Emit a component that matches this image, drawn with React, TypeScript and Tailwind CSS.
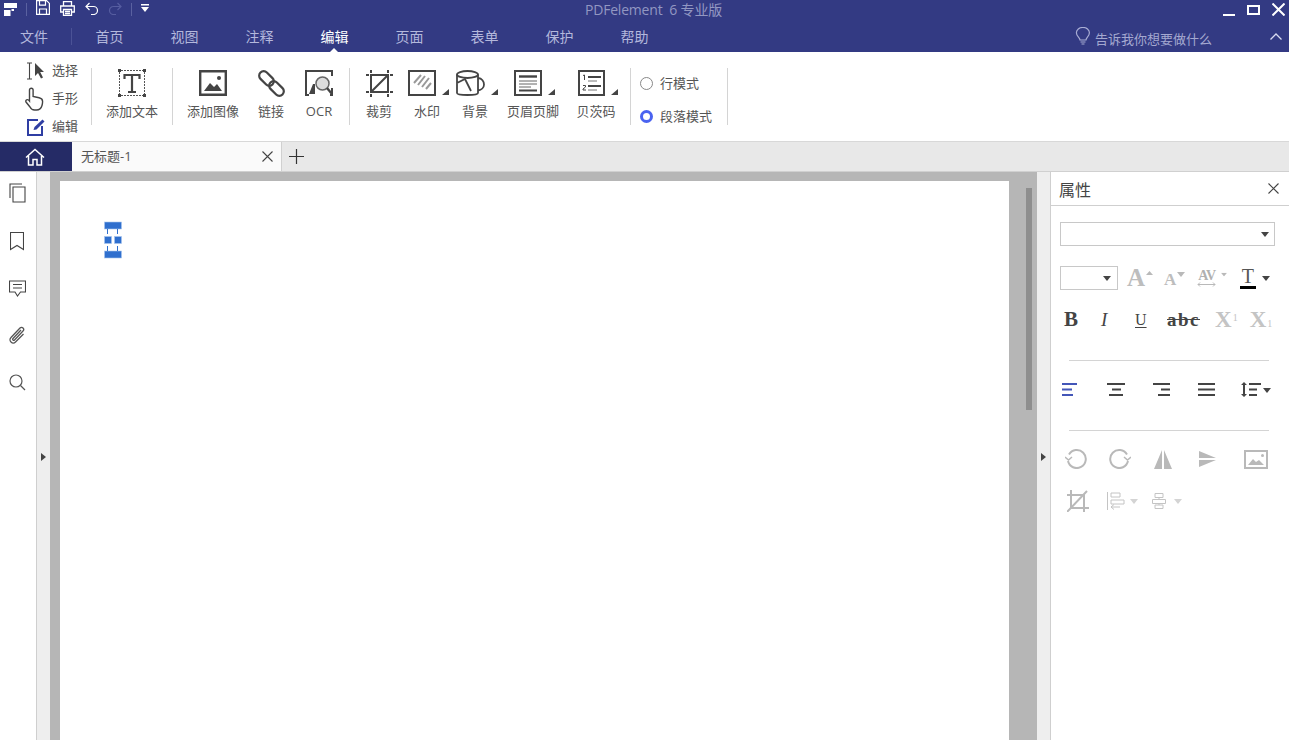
import React from 'react';

const Tri = ({ color = '#444', className = '' }: { color?: string; className?: string }) => (
  <svg width="8" height="5" viewBox="0 0 8 5" className={className}>
    <path d="M0 0h8L4 5z" fill={color} />
  </svg>
);

const Corner = () => (
  <svg width="7" height="6" viewBox="0 0 7 6" className="absolute right-[-13px] bottom-[1px]">
    <path d="M7 0v6H0z" fill="#444" />
  </svg>
);

const Item = ({ label, width, children, corner }: { label: string; width: number; children: React.ReactNode; corner?: boolean }) => (
  <div className="flex flex-col items-center" style={{ width }}>
    <div className={`relative mt-[2px] h-[26px] flex items-center justify-center ${corner ? 'mr-[10px]' : ''}`}>
      {children}
      {corner && <Corner />}
    </div>
    <span className="mt-[6px] text-[13px] leading-[18px] text-[#555]">{label}</span>
  </div>
);

const Group = ({ children, className = '' }: { children: React.ReactNode; className?: string }) => (
  <div className={`mt-[16px] h-[57px] flex border-r border-[#d4d4d4] ${className}`}>{children}</div>
);

const tabs = ['首页', '视图', '注释', '编辑', '页面', '表单', '保护', '帮助'];

function TitleBar() {
  return (
    <header className="h-[52px] shrink-0 bg-[#333a83] flex flex-col">
      <div className="h-[20px] flex items-start relative">
        <div className="flex items-start w-[500px]">
          <svg width="13" height="13" viewBox="0 0 13 13" className="ml-[4px] mt-[3px]">
            <path d="M0 0h13v5H0zM0 7h6.500v6H0zM7.500 6H10v2H7.500z" fill="#fff" />
          </svg>
          <div className="ml-[9px] mt-[3px] h-[13px] w-px bg-[#5a61a0]" />
          <svg width="14" height="15" viewBox="0 0 14 15" className="ml-[9px]" fill="none" stroke="#fff" strokeWidth="1.2">
            <path d="M.6.6h10l2.800 2.800v11H.6zM3.500.6v4.500h6V.6M3.500 14.400V9h7v5.400" />
          </svg>
          <svg width="15" height="15" viewBox="0 0 15 15" className="ml-[10px] mt-[1px]" fill="none" stroke="#fff" strokeWidth="1.3">
            <path d="M3.500 5V.7h8V5M3.500 11H.7V5h13.600v6h-2.800M3.500 8.500h8v6h-8zM5 10.500h5M5 12.500h5" />
          </svg>
          <svg width="14" height="13" viewBox="0 0 14 13" className="ml-[10px] mt-[2px]" fill="none" stroke="#fff" strokeWidth="1.2">
            <path d="M4.500 1 1 4.500 4.500 8M1 4.500h7.500a4 4 0 0 1 0 8H6" />
          </svg>
          <svg width="14" height="13" viewBox="0 0 14 13" className="ml-[9px] mt-[2px]" fill="none" stroke="#565da0" strokeWidth="1.2">
            <path d="M9.500 1 13 4.500 9.500 8M13 4.500H5.500a4 4 0 0 0 0 8H8" />
          </svg>
          <div className="ml-[9px] mt-[3px] h-[13px] w-px bg-[#5a61a0]" />
          <svg width="8" height="8" viewBox="0 0 8 8" className="ml-[9px] mt-[4px]">
            <path d="M0 0h8v1.500H0zM0 3h8L4 8z" fill="#fff" />
          </svg>
        </div>
        <span className="ml-[85px] text-[14px] tracking-[-0.2px] leading-[20px] text-[#9297c2] whitespace-pre">PDFelement  6 专业版</span>
        <div className="ml-auto flex items-start">
          <div className="mt-[14px] h-[2px] w-[12px] bg-white" />
          <div className="ml-[12px] mt-[5px] h-[10px] w-[13px] border-2 border-white" />
          <svg width="13" height="13" viewBox="0 0 13 13" className="ml-[12px] mr-[4px] mt-[3px]" stroke="#fff" strokeWidth="2">
            <path d="M.5.500l12 12M12.500.500l-12 12" />
          </svg>
        </div>
      </div>
      <div className="h-[32px] flex items-start pt-[8px]">
        <span className="w-[72px] h-[17px] pl-[20px] text-[14px] leading-[18px] text-[#b4b8dc] border-r border-[#4b5296]">文件</span>
        {tabs.map(t => (
          <div key={t} className="relative w-[75px] h-[24px] text-center text-[14px] leading-[18px]">
            <span className={t === '编辑' ? 'text-white' : 'text-[#b4b8dc]'}>{t}</span>
            {t === '编辑' && (
              <svg width="8" height="4" viewBox="0 0 8 4" className="absolute left-[33px] bottom-0">
                <path d="M4 0l4 4H0z" fill="#fff" />
              </svg>
            )}
          </div>
        ))}
        <svg width="16" height="18" viewBox="0 0 16 18" className="ml-auto mt-[-1px]" fill="none" stroke="#a9add4" strokeWidth="1.2">
          <path d="M5 13c0-2.500-3.600-3.500-3.600-7.200a6.500 5.400 0 0 1 13 0C14.400 9.500 11 10.500 11 13zM5.500 15h5M6.500 17h3" />
        </svg>
        <span className="ml-[4px] mt-[2px] text-[13px] leading-[18px] text-[#a4a8d0]">告诉我你想要做什么</span>
        <svg width="12" height="7" viewBox="0 0 12 7" className="ml-[58px] mr-[7px] mt-[5px]" fill="none" stroke="#d8daf0" strokeWidth="1.3">
          <path d="M.5 6.500 6 1l5.500 5.500" />
        </svg>
      </div>
    </header>
  );
}

function Ribbon() {
  return (
    <section className="h-[90px] shrink-0 bg-white border-b border-[#d8d8d8] flex items-start">
      <div className="w-[91px] pl-[26px] pt-[5px] shrink-0">
        <div className="h-[28px] flex items-center">
          <svg width="20" height="18" viewBox="0 0 20 18" fill="none">
            <path d="M1 1h5M3.500 1v16M1 17h5" stroke="#444" strokeWidth="1.100" />
            <path d="M9 1v13l3-3 3 5.500 2-1-2.800-5.500H18z" fill="#444" />
          </svg>
          <span className="ml-[6px] text-[13px] text-[#555]">选择</span>
        </div>
        <div className="h-[28px] flex items-center">
          <svg width="20" height="24" viewBox="0 0 20 24" fill="none" stroke="#444" strokeWidth="1.400" className="ml-[-2px]">
            <path d="M5.500 14V3a1.800 1.800 0 0 1 3.600 0v6.500l2.500.5 3.500.8c2 .5 3.500 1.500 3.500 3.700 0 1-.2 2.500-.6 4-.7 2.500-2.500 4.500-5.500 4.500h-2c-2 0-3.500-1-4.500-3L2 15c-1-2 1.500-3.500 3.500-1z" />
          </svg>
          <span className="ml-[8px] text-[13px] text-[#555]">手形</span>
        </div>
        <div className="h-[28px] flex items-center">
          <svg width="19" height="18" viewBox="0 0 19 18" fill="none" className="ml-px">
            <path d="M11 2H1v15h14V8" stroke="#2f3ea3" strokeWidth="2" />
            <path d="M6.500 12 7.500 9 15.500 1.500l2 2-8 8z" fill="#2f3ea3" />
          </svg>
          <span className="ml-[6px] text-[13px] text-[#555]">编辑</span>
        </div>
      </div>
      <div className="mt-[16px] h-[57px] w-px bg-[#d4d4d4]" />
      <Group className="w-[81px] justify-center">
        <Item label="添加文本" width={80}>
          <svg width="28" height="28" viewBox="0 0 28 28" fill="none">
            <path d="M3 1.500h22M3 26.500h22M1.500 3v22M26.500 3v22" stroke="#555" strokeWidth="1" strokeDasharray="2 1" />
            <path d="M0 0h3v3H0zM25 0h3v3h-3zM0 25h3v3H0zM25 25h3v3h-3z" fill="#444" />
            <path d="M6.500 10V6h15v4M14 6v17M10 23h8" stroke="#444" strokeWidth="2.200" />
          </svg>
        </Item>
      </Group>
      <Group className="pl-[10px] w-[177px]">
        <Item label="添加图像" width={60}>
          <svg width="28" height="26" viewBox="0 0 28 26" fill="none">
            <path d="M1.200 1.200h25.600v23.600H1.200z" stroke="#444" strokeWidth="2.400" />
            <path d="M5 21l6-8 4 4 3-3 5 7z" fill="#444" />
            <circle cx="20" cy="8" r="2" fill="#444" />
          </svg>
        </Item>
        <Item label="链接" width={56}>
          <svg width="27" height="27" viewBox="0 0 27 27" fill="none" stroke="#444" strokeWidth="2.200">
            <rect x="-4.500" y="-8.500" width="9" height="17" rx="4.500" transform="translate(8.500 8.500) rotate(-45)" />
            <rect x="-4.500" y="-8.500" width="9" height="17" rx="4.500" transform="translate(18.500 18.500) rotate(-45)" />
          </svg>
        </Item>
        <Item label="OCR" width={40}>
          <svg width="28" height="27" viewBox="0 0 28 27" fill="none">
            <path d="M4 25H1V1h26v5M27 18v7h-2" stroke="#444" strokeWidth="2" />
            <path d="M4 24l4-10h2v10z" fill="#444" />
            <circle cx="17.500" cy="13.500" r="6.500" fill="#ddd" stroke="#666" strokeWidth="1.500" />
            <path d="M22 18l5 6" stroke="#444" strokeWidth="2.400" />
          </svg>
        </Item>
      </Group>
      <Group className="pl-[5px] w-[281px]">
        <Item label="裁剪" width={48}>
          <svg width="27" height="27" viewBox="0 0 27 27" fill="none" stroke="#444">
            <path d="M5 5h17v17H5zM5 22 22 5" strokeWidth="2" />
            <path d="M5 0v3M22 0v3M5 24v3M22 24v3M0 5h3M0 22h3M24 5h3M24 22h3" strokeWidth="2" />
          </svg>
        </Item>
        <Item label="水印" width={48} corner>
          <svg width="28" height="26" viewBox="0 0 28 26" fill="none">
            <path d="M1 1h26v24H1z" stroke="#444" strokeWidth="2" />
            <path d="M6 13l7-8M10 15l7-9M14 17l7-9M18 19l5-6" stroke="#999" strokeWidth="2" />
          </svg>
        </Item>
        <Item label="背景" width={48} corner>
          <svg width="29" height="26" viewBox="0 0 29 26" fill="none" stroke="#444" strokeWidth="1.800">
            <ellipse cx="11.500" cy="4.500" rx="10.500" ry="3.500" />
            <path d="M1 4.500V23c0 1.500 4 2 10.500 2S22 24.500 22 23V4.500M22 8c4 .5 6 3.500 6 6.500S25.500 20 22 20.500M1 13l8-4 6 12" />
          </svg>
        </Item>
        <Item label="页眉页脚" width={68} corner>
          <svg width="28" height="26" viewBox="0 0 28 26" fill="none">
            <path d="M1 1h26v24H1z" stroke="#444" strokeWidth="2" />
            <path d="M5 6.500h18" stroke="#444" strokeWidth="2.400" />
            <path d="M5 11h18M5 14h18M5 17h12" stroke="#666" strokeWidth="1" />
            <path d="M5 20.500h18" stroke="#444" strokeWidth="2" />
          </svg>
        </Item>
        <Item label="贝茨码" width={58} corner>
          <svg width="27" height="26" viewBox="0 0 27 26" fill="none">
            <path d="M1 1h25v24H1z" stroke="#444" strokeWidth="2" />
            <path d="M10 7h13M10 16h13" stroke="#444" strokeWidth="1.800" />
            <path d="M10 11h9M10 20h9" stroke="#777" strokeWidth="1" />
            <path d="M5 5.500 6.500 5v5M5 15.500h2.500v1.500L5 19v1h3" stroke="#444" strokeWidth="1" />
          </svg>
        </Item>
      </Group>
      <Group className="w-[97px] flex-col pl-[9px] pt-[6px] gap-[15px]">
        <label className="flex items-center h-[18px]">
          <span className="w-[13px] h-[13px] rounded-full border border-[#888] bg-white" />
          <span className="ml-[7px] text-[13px] leading-[18px] text-[#555]">行模式</span>
        </label>
        <label className="flex items-center h-[18px]">
          <span className="w-[13px] h-[13px] rounded-full border-[3.500px] border-[#4a63f0] bg-white" />
          <span className="ml-[7px] text-[13px] leading-[18px] text-[#555]">段落模式</span>
        </label>
      </Group>
    </section>
  );
}

function TabBar() {
  return (
    <div className="h-[30px] shrink-0 bg-[#e8e8e8] flex items-stretch border-b border-[#d0d0d0]">
      <div className="w-[72px] bg-[#252b66] flex items-center justify-center">
        <svg width="20" height="18" viewBox="0 0 20 18" fill="none" stroke="#fff" strokeWidth="1.500" className="mr-[2px]">
          <path d="M1 9.500 10 1.500l9 8M3.500 8v9h4.500v-5.500h4V17h4.500V8" />
        </svg>
      </div>
      <div className="w-[210px] bg-[#fafafa] border-r border-[#d0d0d0] flex items-center pl-[9px] pr-[8px]">
        <span className="mb-[2px] text-[13px] leading-[18px] text-[#555]">无标题-1</span>
        <svg width="11" height="11" viewBox="0 0 11 11" className="ml-auto" stroke="#444" strokeWidth="1.100">
          <path d="M.5.500l10 10M10.500.500l-10 10" />
        </svg>
      </div>
      <div className="flex items-center ml-[7px]">
        <svg width="15" height="15" viewBox="0 0 15 15" stroke="#333" strokeWidth="1.200">
          <path d="M7.500 0v15M0 7.500h15" />
        </svg>
      </div>
    </div>
  );
}

function LeftRail() {
  return (
    <aside className="w-[37px] shrink-0 bg-white border-r border-[#cfcfcf] flex flex-col items-center pt-[11px] pr-[2px] gap-[26px]">
      <svg width="17" height="20" viewBox="0 0 17 20" fill="none" stroke="#444" strokeWidth="1.100">
        <path d="M1 15V1h12M4 4h12v15H4z" />
      </svg>
      <svg width="14" height="19" viewBox="0 0 14 19" fill="none" stroke="#444" strokeWidth="1.100" className="mt-[3px]">
        <path d="M.5.500h13v17l-6.500-4-6.500 4z" />
      </svg>
      <svg width="17" height="17" viewBox="0 0 17 17" fill="none" stroke="#444" strokeWidth="1.100" className="mt-[3px]">
        <path d="M.5 1h16v11h-5L8.500 16 6 12H.5zM4 4.500h9M4 8h9" />
      </svg>
      <svg width="18" height="19" viewBox="0 0 18 19" fill="none" stroke="#555" strokeWidth="1.300" className="mt-[3px]">
        <path d="M13 4 5 12.500c-1 1 .5 2.500 1.500 1.500l8.500-9c2-2-1-5-3-3L3 11.500c-3 3 1.500 7.500 4.500 4.500L15.500 8" />
      </svg>
      <svg width="17" height="17" viewBox="0 0 17 17" fill="none" stroke="#555" strokeWidth="1.200" className="mt-[3px]">
        <circle cx="7" cy="7" r="6" />
        <path d="M11.500 11.500l4.500 4.500" />
      </svg>
    </aside>
  );
}

const Strip = () => (
  <div className="w-[13px] shrink-0 bg-[#eeeeee] flex items-center justify-center pt-[2px]">
    <svg width="5" height="8" viewBox="0 0 5 8">
      <path d="M0 0l5 4-5 4z" fill="#444" />
    </svg>
  </div>
);

function Canvas() {
  return (
    <div className="flex-1 bg-[#b6b6b6] flex items-start pl-[10px] pt-[9px] overflow-hidden">
      <div className="w-[949px] h-[600px] bg-white shrink-0 pl-[44px] pt-[40px]">
        <svg width="18" height="38" viewBox="0 0 18 38">
          <g fill="#2f6fce" stroke="#a9c5ee" strokeWidth=".6">
            <rect x=".5" y="1" width="17" height="7" />
            <rect x=".5" y="15.500" width="7" height="7" />
            <rect x="10.500" y="15.500" width="7" height="7" />
            <rect x=".5" y="30" width="17" height="7" />
          </g>
          <path d="M3.500 8v5M13.500 8v5M3.500 25v5M13.500 25v5" stroke="#2f6fce" />
        </svg>
      </div>
      <div className="ml-[17px] mt-[7px] w-[6px] h-[222px] bg-[#8e8e8e] shrink-0" />
    </div>
  );
}

const Gray = '#b9b9b9';

function Properties() {
  return (
    <aside className="w-[239px] shrink-0 bg-white border-l border-[#cfcfcf] flex flex-col font-['Liberation_Serif','Noto_Sans_CJK_SC',serif]">
      <div className="h-[34px] shrink-0 border-b border-[#cfcfcf] flex items-center pl-[8px] pr-[10px] font-['Open_Sans','Noto_Sans_CJK_SC',sans-serif]">
        <span className="mt-[2px] text-[16px] leading-[22px] text-[#444]">属性</span>
        <svg width="11" height="11" viewBox="0 0 11 11" className="ml-auto" stroke="#444" strokeWidth="1.100">
          <path d="M.5.500l10 10M10.500.500l-10 10" />
        </svg>
      </div>
      <div className="ml-[9px] mt-[16px] w-[215px] h-[24px] border border-[#c8c8c8] flex items-center justify-end pr-[5px]">
        <Tri />
      </div>
      <div className="ml-[9px] mt-[20px] h-[24px] flex items-center">
        <div className="w-[58px] h-[24px] border border-[#c8c8c8] flex items-center justify-end pr-[6px] shrink-0">
          <Tri />
        </div>
        <span className="ml-[9px] text-[25px] leading-[24px] font-bold text-[#bdbdbd]">A</span>
        <svg width="7" height="4" viewBox="0 0 7 4" className="ml-[1px] mb-[10px]"><path d="M3.500 0 7 4H0z" fill={Gray} /></svg>
        <span className="ml-[11px] text-[17px] leading-[24px] font-bold text-[#bdbdbd] mt-[3px]">A</span>
        <Tri color={Gray} className="ml-[1px] mb-[8px]" />
        <div className="ml-[12px] flex flex-col items-center w-[19px]">
          <span className="text-[14px] leading-[13px] font-bold tracking-[-0.5px] text-[#b0b0b0]">AV</span>
          <svg width="19" height="5" viewBox="0 0 19 5" fill="none" stroke={Gray}><path d="M1 2.500h17M3 .5l-2 2 2 2M16 .5l2 2-2 2" /></svg>
        </div>
        <Tri color={Gray} className="ml-[4px] mb-[8px] scale-75" />
        <div className="ml-[11px] flex flex-col items-center w-[17px]">
          <span className="text-[20px] leading-[18px] text-[#555]">T</span>
          <div className="mt-[1px] w-[16px] h-[3px] bg-black" />
        </div>
        <Tri className="ml-[6px]" />
      </div>
      <div className="ml-[13px] mt-[18px] h-[24px] flex items-center">
        <span className="w-[15px] text-[21px] font-bold text-[#444]">B</span>
        <span className="ml-[22px] w-[11px] text-[19px] italic text-[#444]">I</span>
        <span className="ml-[23px] w-[13px] text-[16px] underline underline-offset-2 text-[#444]">U</span>
        <span className="ml-[19px] text-[19px] font-bold tracking-[1.500px] line-through text-[#444]">abc</span>
        <span className="ml-[15px] text-[23px] font-bold text-[#c4c4c4]">X</span>
        <span className="text-[10px] mb-[6px] ml-[1px] text-[#c4c4c4]">1</span>
        <span className="ml-[12px] text-[23px] font-bold text-[#c4c4c4]">X</span>
        <span className="text-[10px] mt-[6px] ml-[1px] text-[#c4c4c4]">1</span>
      </div>
      <div className="ml-[18px] mt-[28px] w-[200px] h-px bg-[#d4d4d4] shrink-0" />
      <div className="ml-[11px] mt-[20px] h-[16px] flex items-center">
        <svg width="16" height="13" viewBox="0 0 16 13"><path d="M0 0h15v2H0zM0 5.500h10v2H0zM0 11h11v2H0z" fill="#4356b8" /></svg>
        <svg width="18" height="13" viewBox="0 0 18 13" className="ml-[29px]"><path d="M0 0h18v2H0zM5 5.500h9v2H5zM2 11h14v2H2z" fill="#444" /></svg>
        <svg width="18" height="13" viewBox="0 0 18 13" className="ml-[28px]"><path d="M0 0h17v2H0zM8 5.500h9v2H8zM5 11h12v2H5z" fill="#444" /></svg>
        <svg width="17" height="13" viewBox="0 0 17 13" className="ml-[27px]"><path d="M0 0h17v2H0zM0 5.500h17v2H0zM0 11h17v2H0z" fill="#444" /></svg>
        <svg width="20" height="15" viewBox="0 0 20 15" className="ml-[26px]" fill="#444"><path d="M3 0l3 3H4v9h2l-3 3-3-3h2V3H0zM8 1h12v2H8zM8 6.500h8v2H8zM8 12h8v2H8z" /></svg>
        <Tri className="ml-[2px] mt-[2px]" />
      </div>
      <div className="ml-[18px] mt-[33px] w-[200px] h-px bg-[#d4d4d4] shrink-0" />
      <div className="ml-[14px] mt-[18px] h-[20px] flex items-center">
        <svg width="22" height="20" viewBox="0 0 22 20" fill="none" stroke={Gray} strokeWidth="2"><path d="M4 5.500A9 9 0 1 1 3 12" /><path d="M0 8l3.500 3L7 8" strokeWidth="1.500" /></svg>
        <svg width="22" height="20" viewBox="0 0 22 20" fill="none" stroke={Gray} strokeWidth="2" className="ml-[22px]"><path d="M18 5.500A9 9 0 1 0 19 12" /><path d="M22 8l-3.500 3L15 8" strokeWidth="1.500" /></svg>
        <svg width="18" height="19" viewBox="0 0 18 19" className="ml-[23px]" fill={Gray}><path d="M8 0v19H0zM10 0v19h8z" /></svg>
        <svg width="17" height="16" viewBox="0 0 17 16" className="ml-[27px]" fill={Gray}><path d="M0 0l17 7H0zM0 9h17L0 16z" /></svg>
        <svg width="24" height="19" viewBox="0 0 24 19" className="ml-[28px]" fill="none"><path d="M1 1h22v17H1z" stroke={Gray} strokeWidth="2" /><path d="M4 15l5-6 3 3 3-2 5 5z" fill={Gray} /><circle cx="18.500" cy="5.500" r="1.500" fill={Gray} /></svg>
      </div>
      <div className="ml-[16px] mt-[21px] h-[22px] flex items-center">
        <svg width="22" height="22" viewBox="0 0 22 22" fill="none" stroke={Gray} strokeWidth="2"><path d="M4 0v18h18M0 5h17v17M0 22 20 1" /></svg>
        <svg width="20" height="18" viewBox="0 0 20 18" className="ml-[18px]" fill="none" stroke="#c4c4c4"><path d="M.5 0v18M4 1h9v4H4zM4 8h13v4H4zM13 15H4M7 12.500 4 15l3 2.500" /></svg>
        <Tri color="#d4d4d4" className="ml-[3px]" />
        <svg width="14" height="16" viewBox="0 0 14 16" className="ml-[14px]" fill="none" stroke="#c4c4c4"><path d="M3 .5h8v4H3zM.5 6.500h13v4H.5zM3 12h8v3.500H3zM7 4.500v2M7 10.500V12" /></svg>
        <Tri color="#d4d4d4" className="ml-[8px]" />
      </div>
    </aside>
  );
}

export default function App() {
  return (
    <div className="w-full h-screen overflow-hidden flex flex-col bg-white font-['Open_Sans','Noto_Sans_CJK_SC',sans-serif]">
      <TitleBar />
      <Ribbon />
      <TabBar />
      <div className="flex-1 flex min-h-0">
        <LeftRail />
        <Strip />
        <Canvas />
        <Strip />
        <Properties />
      </div>
    </div>
  );
}
